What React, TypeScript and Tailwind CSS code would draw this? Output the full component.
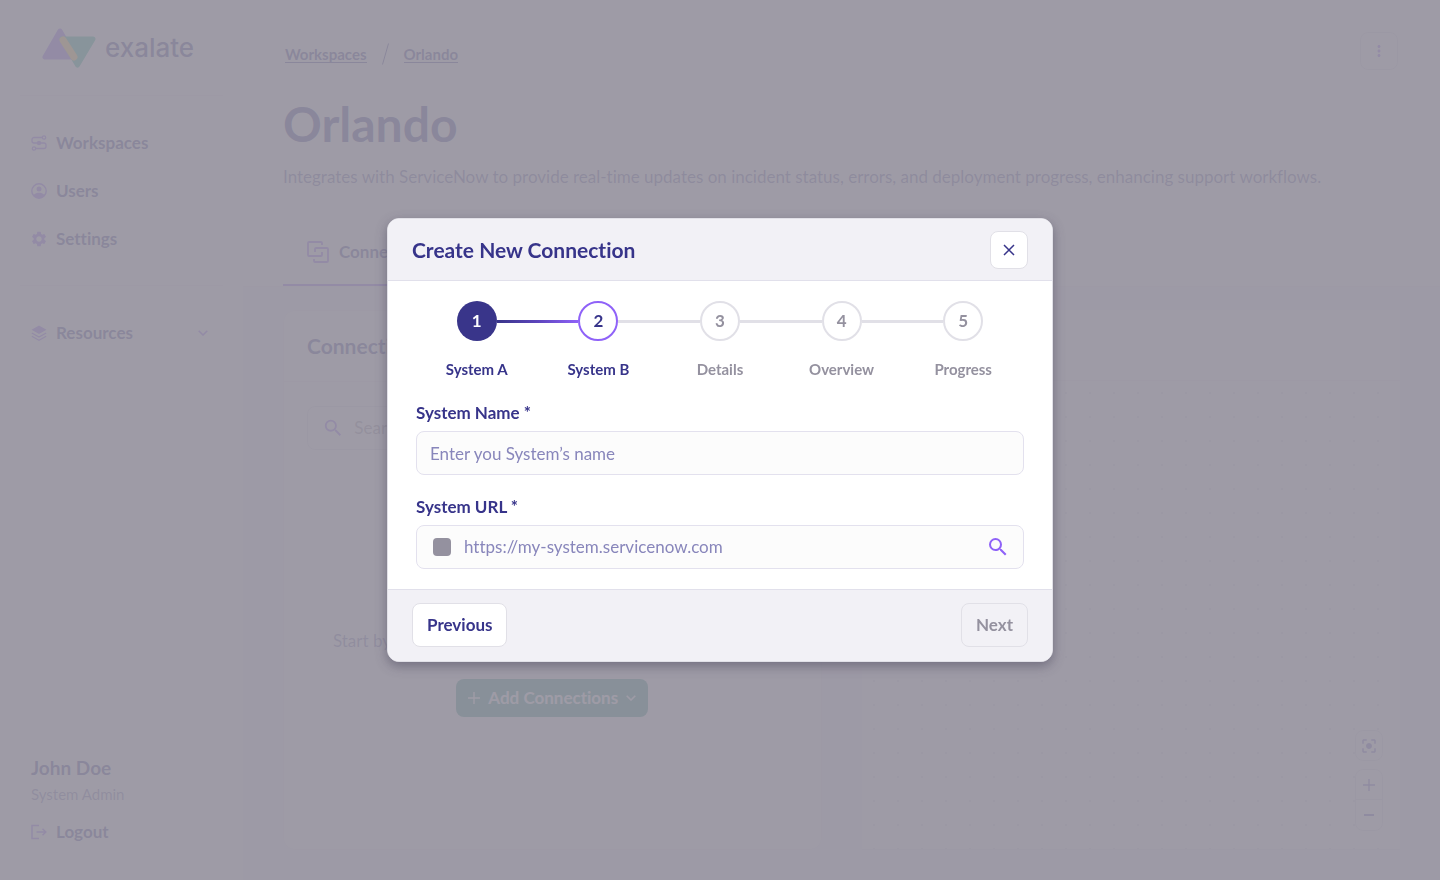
import type { ReactNode } from "react";
import { MdCenterFocusStrong, MdMoreVert, MdSearch, MdSettings } from "react-icons/md";

const steps = ["System A", "System B", "Details", "Overview", "Progress"];
const currentStep = 1;

const Logo = () => (
  <svg width="56" height="42" viewBox="0 0 56 42" aria-hidden="true">
    <path d="M19 4 L4 30 H34 Z" fill="#8b5cf6" stroke="#8b5cf6" strokeWidth="5" strokeLinejoin="round" />
    <path d="M21 12 H52 L36.500 38 Z" fill="#1fb88a" stroke="#1fb88a" strokeWidth="5" strokeLinejoin="round" />
    <path d="M22 13 L33 30" stroke="#f7c948" strokeWidth="7" strokeLinecap="round" />
  </svg>
);

const WorkspacesIcon = () => (
  <svg width="16" height="16" viewBox="0 0 16 16" fill="none" stroke="currentColor" strokeWidth="1.3">
    <path d="M11 2.500H3A2 2 0 0 0 1 4.500V6a2 2 0 0 0 2 2h10a2 2 0 0 1 2 2v1.500a2 2 0 0 1-2 2H5" />
    <circle cx="13" cy="2.500" r="1.700" />
    <circle cx="3" cy="13.500" r="1.700" />
    <circle cx="8" cy="8" r="2.200" fill="currentColor" stroke="none" />
  </svg>
);

const UserIcon = () => (
  <svg width="16" height="16" viewBox="0 0 16 16" fill="none">
    <circle cx="8" cy="8" r="7.200" stroke="currentColor" strokeWidth="1.400" />
    <circle cx="8" cy="5.900" r="2.500" fill="currentColor" />
    <path d="M2.500 12C4 10.300 6 9.800 8 9.800s4 .5 5.500 2.200C12.500 14 10.500 15.200 8 15.200S3.500 14 2.500 12Z" fill="currentColor" />
  </svg>
);

const LayersIcon = () => (
  <svg width="16" height="16" viewBox="0 0 16 16" fill="none">
    <path d="M8 .5 15.500 4.800 8 9 .5 4.800Z" fill="currentColor" />
    <path d="M.8 8 8 12l7.200-4M.8 11.200l7.200 4 7.200-4" stroke="currentColor" strokeWidth="1.300" />
  </svg>
);

const LogoutIcon = () => (
  <svg width="16" height="16" viewBox="0 0 16 16" fill="none" stroke="currentColor" strokeWidth="1.500">
    <path d="M8 1.500H1v13h7M5.500 8h9M11.500 4.800 14.800 8l-3.300 3.200" />
  </svg>
);

const ConnectionsIcon = () => (
  <svg width="22" height="22" viewBox="0 0 22 22" fill="none" stroke="currentColor" strokeWidth="1.800">
    <path d="M15 4V2a1 1 0 0 0-1-1H2a1 1 0 0 0-1 1v12a1 1 0 0 0 1 1h12a1 1 0 0 0 1-1v-3" />
    <path d="M8 11V8a1 1 0 0 1 1-1h11a1 1 0 0 1 1 1v12a1 1 0 0 1-1 1H8a1 1 0 0 1-1-1v-2" />
  </svg>
);

const ChevronIcon = () => (
  <svg width="10" height="6" viewBox="0 0 10 6" fill="none" stroke="currentColor" strokeWidth="1.600">
    <path d="M.7.7 5 5 9.300.7" />
  </svg>
);

const PlusIcon = () => (
  <svg width="12" height="12" viewBox="0 0 12 12" stroke="currentColor" strokeWidth="1.400">
    <path d="M6 0v12M0 6h12" />
  </svg>
);

const NavItem = ({ icon, label, chevron }: { icon: ReactNode; label: string; chevron?: boolean }) => (
  <a href="#" className="flex h-6 items-center gap-[9px] font-bold">
    <span className="text-[#8b5cf6]">{icon}</span>
    {label}
    {chevron && (
      <span className="ml-auto mr-[15px] text-[#8b5cf6]">
        <ChevronIcon />
      </span>
    )}
  </a>
);

const Sidebar = () => (
  <aside className="flex w-[243px] shrink-0 flex-col bg-white px-5">
    <div className="flex h-24 items-center gap-2 border-b border-[#eeecf4] pl-[21px]">
      <Logo />
      <span className="font-['Inter',sans-serif] text-[26px] leading-8 font-medium">exalate</span>
    </div>
    <nav className="flex flex-col gap-6 border-b border-[#eeecf4] pt-[35px] pb-[34px] pl-[11px]">
      <NavItem icon={<WorkspacesIcon />} label="Workspaces" />
      <NavItem icon={<UserIcon />} label="Users" />
      <NavItem icon={<MdSettings size={18} className="-mx-px" />} label="Settings" />
    </nav>
    <nav className="pt-[35px] pl-[11px]">
      <NavItem icon={<LayersIcon />} label="Resources" chevron />
    </nav>
    <div className="mt-auto pb-9 pl-[11px]">
      <p className="text-[19px] leading-6 font-bold">John Doe</p>
      <p className="mt-0.5 mb-3.5 text-[15px] leading-6 text-[#37348a]/70">System Admin</p>
      <NavItem icon={<LogoutIcon />} label="Logout" />
    </div>
  </aside>
);

const ConnectionsCard = () => (
  <section className="flex flex-col rounded-xl border border-[#eeecf4] bg-white">
    <div className="flex h-[71px] items-center border-b border-[#eeecf4] px-[23px]">
      <h2 className="text-[21px] font-bold">Connections</h2>
    </div>
    <div className="flex flex-1 flex-col items-center px-[23px] pt-6">
      <label className="flex h-11 w-full items-center gap-2.5 rounded-lg border border-[#e2e1e8] px-3.5">
        <MdSearch size={24} className="text-[#8b5cf6]" />
        <input type="text" aria-label="Search connections" placeholder="Search" className="w-full outline-none placeholder:text-[#94919f]" />
      </label>
      <p className="mt-auto text-center leading-6 text-[#37348a]/70">
        Start by creating your first connection with the new system
      </p>
      <button type="button" className="mt-[26px] mb-[132px] flex h-[38px] items-center gap-2 rounded-lg bg-[#1f8f7a] px-3 font-bold text-white">
        <PlusIcon />
        Add Connections
        <ChevronIcon />
      </button>
    </div>
  </section>
);

const Canvas = () => (
  <section className="flex flex-col border-b border-[#ecebf3]">
    <div className="h-[71px] border-b border-[#eeecf4] bg-white" />
    <div className="flex flex-1 flex-col items-end justify-end bg-[#fafafc] bg-[radial-gradient(#dcdae8_1px,transparent_1px)] bg-size-[24px_24px] pr-[17px] pb-[18px] text-[#6b5fc0]">
      <button type="button" aria-label="Center" className="flex h-[31px] w-7 items-center justify-center rounded-lg border border-[#e2e1e8] bg-white">
        <MdCenterFocusStrong size={18} />
      </button>
      <div className="mt-2 flex w-7 flex-col rounded-lg border border-[#e2e1e8] bg-white">
        <button type="button" aria-label="Zoom in" className="flex h-[30px] items-center justify-center border-b border-[#e2e1e8]">
          <PlusIcon />
        </button>
        <button type="button" aria-label="Zoom out" className="flex h-[30px] items-center justify-center">
          <svg width="10" height="2" viewBox="0 0 10 2">
            <path d="M0 1h10" stroke="currentColor" strokeWidth="2" />
          </svg>
        </button>
      </div>
    </div>
  </section>
);

const Workspace = () => (
  <main className="flex min-w-0 flex-1 flex-col bg-[#f6f4fc]">
    <header className="border-b border-[#eeecf4] bg-white px-10 pt-8">
      <div className="flex h-[38px] items-center justify-between">
        <nav aria-label="Breadcrumb" className="flex items-center gap-[15px] pt-1.5 pl-0.5 text-[15px] font-bold">
          <a href="#" className="border-b border-current leading-4">Workspaces</a>
          <svg width="7" height="22" viewBox="0 0 7 22" stroke="currentColor">
            <path d="M6.500.5.5 21.500" />
          </svg>
          <a href="#" className="border-b border-current leading-4">Orlando</a>
        </nav>
        <button type="button" aria-label="More" className="mr-0.5 flex size-[38px] items-center justify-center rounded-lg border border-[#e2e1e8] text-[#8b5cf6]">
          <MdMoreVert size={18} />
        </button>
      </div>
      <h1 className="mt-[26px] text-5xl leading-[56px] font-bold">Orlando</h1>
      <p className="mt-[13px] leading-6 text-[#37348a]/80">
        Integrates with ServiceNow to provide real-time updates on incident status, errors, and deployment progress, enhancing support workflows.
      </p>
      <div className="mt-[30px] flex">
        <button type="button" className="flex h-[67px] items-center gap-2.5 border-b-2 border-[#8b5cf6] px-6 font-bold">
          <span className="text-[#8b5cf6]">
            <ConnectionsIcon />
          </span>
          Connections
        </button>
      </div>
    </header>
    <div className="grid flex-1 grid-cols-2 gap-10 px-10 pt-[23px] pb-[30px]">
      <ConnectionsCard />
      <Canvas />
    </div>
  </main>
);

const Stepper = () => (
  <ol className="flex">
    {steps.map((label, i) => {
      const reached = i <= currentStep;
      return (
        <li key={label} className="flex flex-1 flex-col items-center">
          <div className="flex w-full items-center">
            <span
              className={
                i === 0
                  ? "h-[3px] flex-1"
                  : i === currentStep
                    ? "h-[3px] flex-1 bg-linear-to-r from-[#5d45bd] to-[#8f62f8]"
                    : "h-[3px] flex-1 bg-[#e1e0e7]"
              }
            />
            <span
              className={
                i < currentStep
                  ? "flex size-10 items-center justify-center rounded-full bg-[#39358a] font-bold text-white"
                  : i === currentStep
                    ? "flex size-10 items-center justify-center rounded-full border-2 border-[#8f62f8] font-bold"
                    : "flex size-10 items-center justify-center rounded-full border-2 border-[#e1e0e7] font-bold text-[#94919f]"
              }
            >
              {i + 1}
            </span>
            <span
              className={
                i === steps.length - 1
                  ? "h-[3px] flex-1"
                  : i < currentStep
                    ? "h-[3px] flex-1 bg-linear-to-r from-[#39358a] to-[#5d45bd]"
                    : "h-[3px] flex-1 bg-[#e1e0e7]"
              }
            />
          </div>
          <span className={reached ? "mt-[18px] text-[15px] leading-5 font-bold" : "mt-[18px] text-[15px] leading-5 font-bold text-[#94919f]"}>
            {label}
          </span>
        </li>
      );
    })}
  </ol>
);

const CreateConnectionModal = () => (
  <div className="fixed inset-0 flex items-center justify-center bg-[#94909c]/90">
    <div
      role="dialog"
      aria-modal="true"
      aria-labelledby="dialog-title"
      className="w-full max-w-[666px] overflow-hidden rounded-xl border border-[#e1e0e7] bg-white shadow-[0_4px_12px_rgba(60,56,80,0.45)]"
    >
      <div className="flex h-[62px] items-center justify-between border-b border-[#e1e0eb] bg-[#f2f1f6] px-6">
        <h2 id="dialog-title" className="text-[21px] font-bold">Create New Connection</h2>
        <button type="button" aria-label="Close" className="flex size-[38px] items-center justify-center rounded-lg border border-[#e1e0e7] bg-white">
          <svg width="12" height="12" viewBox="0 0 12 12" stroke="currentColor" strokeWidth="1.500">
            <path d="m1 1 10 10M11 1 1 11" />
          </svg>
        </button>
      </div>
      <div className="px-7 py-5">
        <Stepper />
        <form className="mt-[22px] flex flex-col gap-5">
          <div>
            <label htmlFor="system-name" className="mb-1.5 block leading-6 font-bold">System Name *</label>
            <input
              id="system-name"
              type="text"
              placeholder="Enter you System’s name"
              className="block h-11 w-full rounded-lg border border-[#e3e1ee] bg-[#fcfcfc] px-[13px] outline-none placeholder:text-[#8886bb]"
            />
          </div>
          <div>
            <label htmlFor="system-url" className="mb-1.5 block leading-6 font-bold">System URL *</label>
            <div className="flex h-11 items-center rounded-lg border border-[#e3e1ee] bg-[#fcfcfc] pr-[13px] pl-4">
              <span className="size-[18px] rounded bg-[#94919f]" />
              <input
                id="system-url"
                type="url"
                placeholder="https://my-system.servicenow.com"
                className="ml-[13px] min-w-0 flex-1 outline-none placeholder:text-[#8886bb]"
              />
              <MdSearch size={24} className="text-[#8f62f8]" />
            </div>
          </div>
        </form>
      </div>
      <div className="border-t border-[#e1e0eb] bg-[#f2f1f6] px-6 pt-[13px] pb-3.5">
        <div className="flex justify-between">
          <button type="button" className="h-11 rounded-lg border border-[#e1e0e7] bg-white px-3.5 font-bold">Previous</button>
          <button type="button" disabled className="h-11 rounded-lg border border-[#e1e0e7] px-3.5 font-bold text-[#94919f]">Next</button>
        </div>
      </div>
    </div>
  </div>
);

const App = () => {
  return (
    <div className="flex min-h-screen font-['Lato',sans-serif] text-[17px] text-[#37348a] [font-variant-ligatures:none]">
      <Sidebar />
      <Workspace />
      <CreateConnectionModal />
    </div>
  );
};

export default App;
